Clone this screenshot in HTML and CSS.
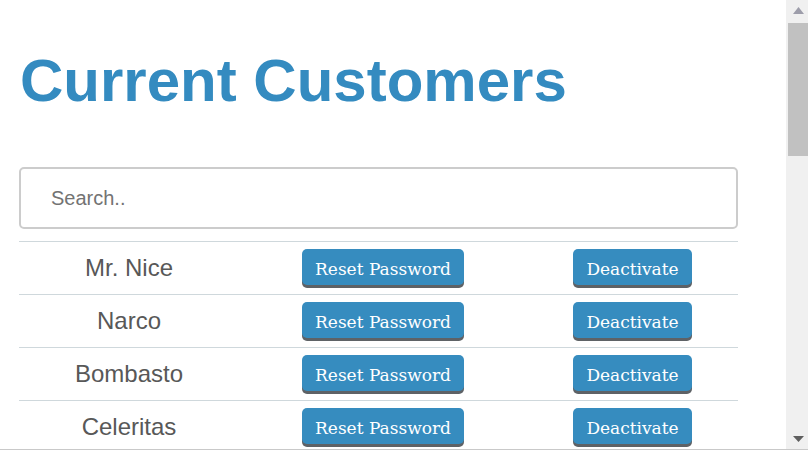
FILE: index.html
```html
<!DOCTYPE html>
<html lang="en">
<head>
<meta charset="utf-8">
<title>Current Customers</title>
<link rel="stylesheet" href="styles.css">
</head>
<body>
<div class="window">
  <main class="viewport">
    <h1 class="title">Current Customers</h1>
    <input class="search" type="text" placeholder="Search..">
    <div class="list">
      <div class="row"><span class="name">Mr. Nice</span><span class="cell"><button class="btn">Reset Password</button></span><span class="cell"><button class="btn">Deactivate</button></span></div>
      <div class="row"><span class="name">Narco</span><span class="cell"><button class="btn">Reset Password</button></span><span class="cell"><button class="btn">Deactivate</button></span></div>
      <div class="row"><span class="name">Bombasto</span><span class="cell"><button class="btn">Reset Password</button></span><span class="cell"><button class="btn">Deactivate</button></span></div>
      <div class="row"><span class="name">Celeritas</span><span class="cell"><button class="btn">Reset Password</button></span><span class="cell"><button class="btn">Deactivate</button></span></div>
    </div>
  </main>
  <div class="scrollbar" aria-hidden="true">
    <div class="sb-arrow sb-up">
      <svg width="11" height="7" viewBox="0 0 11 7"><polygon points="5.5,0 11,7 0,7" fill="#9d9daa"/></svg>
    </div>
    <div class="sb-track">
      <div class="sb-thumb"></div>
    </div>
    <div class="sb-arrow sb-down">
      <svg width="11" height="6" viewBox="0 0 11 6"><polygon points="0,0 11,0 5.5,6" fill="#5f5f5f"/></svg>
    </div>
  </div>
</div>
</body>
</html>
```

FILE: styles.css
```css
html, body {
  margin: 0;
  padding: 0;
  background: #ffffff;
  overflow: hidden;
}

.window {
  display: flex;
  height: 449px;
  border-bottom: 1px solid #c9c9c9;
}

.viewport {
  flex: 1;
  overflow: hidden;
  padding: 0 0 0 19px;
  font-family: "Liberation Sans", Arial, sans-serif;
}

.title {
  margin: 46px 0 0 1px;
  font-size: 60px;
  line-height: 70px;
  font-weight: bold;
  color: #348bc0;
}

.search {
  display: block;
  box-sizing: border-box;
  width: 719px;
  height: 62px;
  margin: 51px 0 0 0;
  padding: 0 0 0 30px;
  border: 2px solid #cccccc;
  border-radius: 5px;
  font-family: "Liberation Sans", Arial, sans-serif;
  font-size: 20px;
  color: #333333;
  outline: none;
}

.search::placeholder {
  color: #737373;
}

.list {
  width: 719px;
  margin-top: 12px;
}

.row {
  display: grid;
  grid-template-columns: 220px 288px 211px;
  align-items: center;
  height: 52px;
  border-top: 1px solid #cfd8dc;
}

.name {
  text-align: center;
  font-size: 24px;
  color: #585858;
}

.cell {
  display: flex;
  justify-content: center;
}

.btn {
  box-sizing: border-box;
  margin-bottom: 2px;
  height: 36px;
  padding: 3px 13.5px 0;
  border: none;
  border-radius: 5px;
  background: #368cbf;
  box-shadow: 0 3px 0 #5e6266;
  color: #ffffff;
  font-family: "DejaVu Serif", "Liberation Serif", serif;
  font-size: 17px;
  cursor: pointer;
}

.scrollbar {
  display: flex;
  flex-direction: column;
  width: 22px;
  background: #f0f0f0;
}

.sb-arrow {
  display: flex;
  justify-content: center;
  height: 23px;
  padding-left: 3px;
  box-sizing: border-box;
}

.sb-up {
  align-items: flex-start;
  padding-top: 7px;
}

.sb-down {
  align-items: flex-end;
  padding-bottom: 7px;
}

.sb-track {
  flex: 1;
}

.sb-thumb {
  height: 133px;
  margin-left: 2px;
  background: #c1c1c1;
}
```
